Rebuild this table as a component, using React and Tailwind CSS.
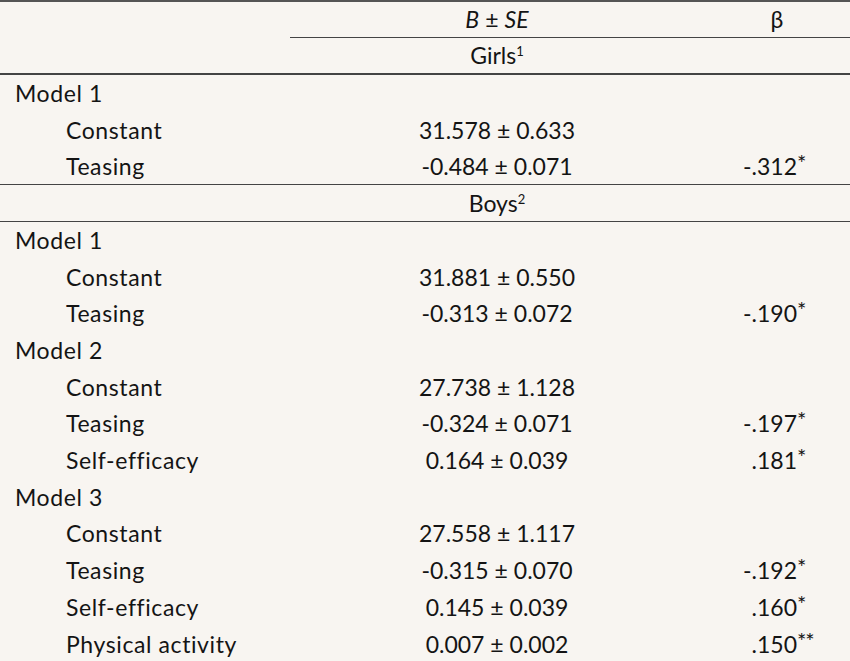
import React from "react";

const rows = [
  { type: "model", label: "Model 1" },
  { type: "var", label: "Constant", b: "31.578 ± 0.633" },
  { type: "var", label: "Teasing", b: "-0.484 ± 0.071", beta: "-.312", star: "*", last: true },
];
const boys = [
  { type: "model", label: "Model 1" },
  { type: "var", label: "Constant", b: "31.881 ± 0.550" },
  { type: "var", label: "Teasing", b: "-0.313 ± 0.072", beta: "-.190", star: "*" },
  { type: "model", label: "Model 2" },
  { type: "var", label: "Constant", b: "27.738 ± 1.128" },
  { type: "var", label: "Teasing", b: "-0.324 ± 0.071", beta: "-.197", star: "*" },
  { type: "var", label: "Self-efficacy", b: "0.164 ± 0.039", beta: ".181", star: "*" },
  { type: "model", label: "Model 3" },
  { type: "var", label: "Constant", b: "27.558 ± 1.117" },
  { type: "var", label: "Teasing", b: "-0.315 ± 0.070", beta: "-.192", star: "*" },
  { type: "var", label: "Self-efficacy", b: "0.145 ± 0.039", beta: ".160", star: "*" },
  { type: "var", label: "Physical activity", b: "0.007 ± 0.002", beta: ".150", star: "**" },
];

function Row({ r, border }) {
  return (
    <div className={`grid grid-cols-[290px_414px_1fr] h-[36.7px] items-center ${border || ""}`}>
      <div className={`tracking-[0.6px] ${r.type === "model" ? "pl-[15px]" : "pl-[66px]"}`}>{r.label}</div>
      <div className="text-center">{r.b || ""}</div>
      <div className="flex">
        {r.beta ? (
          <>
            <span className="w-[93px] text-right">{r.beta}</span>
            <span className="text-[22px] leading-none self-start -mt-[3px] tracking-[-1px]">{r.star}</span>
          </>
        ) : null}
      </div>
    </div>
  );
}

export default function App() {
  return (
    <div
      className="w-[850px] h-[661px] bg-[#f8f5f1] text-[#141414] text-[23px] leading-none overflow-hidden"
      style={{ fontFamily: "Lato, 'Open Sans', sans-serif" }}
    >
      <div className="border-t-2 border-[#555]" />
      <div className="grid grid-cols-[290px_414px_1fr] h-[35.7px] items-center">
        <div />
        <div className="text-center italic border-b border-[#444] h-full flex items-center justify-center">
          B <span className="not-italic mx-[6px]">±</span> SE
        </div>
        <div className="text-center border-b border-[#444] h-full flex items-center justify-center">β</div>
      </div>
      <div className="h-[37.7px] flex items-center justify-center border-b-2 border-[#444] pl-[290px] pr-[146px]">
        <span>
          Girls<sup className="text-[13px] align-super relative top-[1px]">1</sup>
        </span>
      </div>
      {rows.map((r, i) => (
        <Row key={"g" + i} r={r} border={r.last ? "border-b border-[#444]" : ""} />
      ))}
      <div className="h-[36.7px] flex items-center justify-center border-b border-[#444] pl-[290px] pr-[146px]">
        <span>
          Boys<sup className="text-[13px] align-super relative top-[1px]">2</sup>
        </span>
      </div>
      {boys.map((r, i) => (
        <Row key={"b" + i} r={r} />
      ))}
      <div className="border-t-2 border-[#444]" />
    </div>
  );
}
